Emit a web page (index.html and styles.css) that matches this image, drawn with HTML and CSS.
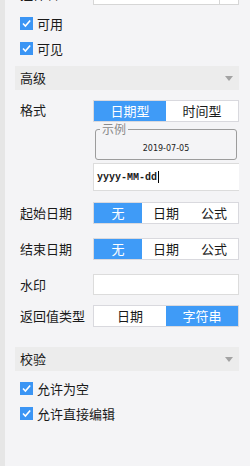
FILE: index.html
```html
<!DOCTYPE html>
<html lang="zh">
<head>
  <meta charset="UTF-8" />
  <title>控件属性</title>
  <link rel="stylesheet" href="styles.css">
</head>
<body>
  <div class="app">
    <div class="strip"></div>
    <div class="panel">
      <div class="row row-name">
        <span class="label">控件名</span>
        <div class="combo"><span class="combo-text"></span><span class="combo-btn"></span></div>
      </div>

      <label class="check check-first">
        <span class="box"><svg width="13" height="13" viewBox="0 0 13 13"><path d="M3 6.5 L5.4 9 L10.2 3.4" fill="none" stroke="#fff" stroke-width="1.6"/></svg></span>
        可用
      </label>
      <label class="check">
        <span class="box"><svg width="13" height="13" viewBox="0 0 13 13"><path d="M3 6.5 L5.4 9 L10.2 3.4" fill="none" stroke="#fff" stroke-width="1.6"/></svg></span>
        可见
      </label>

      <div class="group group-adv">高级<span class="caret"></span></div>

      <div class="row row-format">
        <span class="label label-top">格式</span>
        <div class="seg seg-2">
          <span class="on">日期型</span>
          <span>时间型</span>
        </div>
      </div>

      <div class="example">
        <span class="legend">示例</span>
        <div class="sample">2019-07-05</div>
      </div>

      <div class="pattern"><span>yyyy-MM-dd</span><i class="cursor"></i></div>

      <div class="row row-start">
        <span class="label">起始日期</span>
        <div class="seg seg-3">
          <span class="on">无</span>
          <span>日期</span>
          <span>公式</span>
        </div>
      </div>

      <div class="row row-end">
        <span class="label">结束日期</span>
        <div class="seg seg-3">
          <span class="on">无</span>
          <span>日期</span>
          <span>公式</span>
        </div>
      </div>

      <div class="row row-mark">
        <span class="label">水印</span>
        <div class="text-input"></div>
      </div>

      <div class="row row-return">
        <span class="label">返回值类型</span>
        <div class="seg seg-2">
          <span>日期</span>
          <span class="on">字符串</span>
        </div>
      </div>

      <div class="group group-check">校验<span class="caret"></span></div>

      <label class="check check-empty">
        <span class="box"><svg width="13" height="13" viewBox="0 0 13 13"><path d="M3 6.5 L5.4 9 L10.2 3.4" fill="none" stroke="#fff" stroke-width="1.6"/></svg></span>
        允许为空
      </label>
      <label class="check">
        <span class="box"><svg width="13" height="13" viewBox="0 0 13 13"><path d="M3 6.5 L5.4 9 L10.2 3.4" fill="none" stroke="#fff" stroke-width="1.6"/></svg></span>
        允许直接编辑
      </label>
    </div>
  </div>
</body>
</html>
```

FILE: styles.css
```css
body {
  margin: 0;
  background: #f4f4f6;
  font-family: "Noto Sans CJK SC", "Noto Sans", sans-serif;
  font-size: 13px;
  color: #1a1a1a;
  overflow: hidden;
}

.app {
  display: flex;
  height: 466px;
}

.strip {
  width: 5px;
  background: #e6e6e6;
  flex-shrink: 0;
}

.panel {
  width: 224px;
  margin-left: 10px;
  display: flex;
  flex-direction: column;
  overflow: hidden;
}

.row {
  display: flex;
  align-items: center;
  padding-left: 5px;
}

.label {
  width: 73px;
  flex-shrink: 0;
  line-height: 18px;
}

.label-top {
  align-self: flex-start;
  padding-top: 1px;
}

.row-name {
  margin-top: -18px;
  height: 23px;
}

.combo {
  width: 146px;
  height: 23px;
  box-sizing: border-box;
  border: 1px solid #d6d6d6;
  background: #fff;
  display: flex;
}

.combo-text {
  flex: 1;
}

.combo-btn {
  width: 18px;
  border-left: 1px solid #d6d6d6;
}

.check {
  display: flex;
  align-items: center;
  gap: 4px;
  padding-left: 5px;
  height: 13px;
  line-height: 13px;
  margin-top: 12px;
}

.check-first {
  margin-top: 12px;
}

.check-empty {
  margin-top: 11px;
}

.box {
  width: 13px;
  height: 13px;
  background: #3b95f4;
  display: block;
}

.box svg {
  display: block;
}

.group {
  height: 24px;
  line-height: 24px;
  background: #ececec;
  padding-left: 5px;
  position: relative;
}

.group-adv {
  margin-top: 11px;
}

.group-check {
  margin-top: 20px;
}

.caret {
  position: absolute;
  right: 6px;
  top: 10px;
  border-left: 4px solid transparent;
  border-right: 4px solid transparent;
  border-top: 5px solid #a3a3a3;
}

.seg {
  width: 147px;
  height: 22px;
  box-sizing: border-box;
  border: 1px solid #d9d9de;
  background: #fff;
  display: flex;
}

.seg span {
  flex: 1;
  text-align: center;
  line-height: 20px;
}

.seg .on {
  background: #3f9bf7;
  color: #fff;
}

.seg-3 span {
  flex: 0 0 48px;
}

.seg-3 span:last-child {
  flex: 1;
}

.row-format {
  margin-top: 10px;
}

.example {
  margin: 7px 0 0 80px;
  width: 142px;
  height: 31px;
  box-sizing: border-box;
  border: 1px solid #9c9c9c;
  border-radius: 3px;
  position: relative;
}

.legend {
  position: absolute;
  left: 4px;
  top: -8px;
  padding: 0 2px;
  background: #f4f4f6;
  color: #8a8a8a;
  font-size: 12px;
  line-height: 14px;
}

.sample {
  text-align: center;
  font-family: "DejaVu Sans", sans-serif;
  font-size: 8px;
  line-height: 10px;
  padding-top: 14px;
  color: #222;
}

.pattern {
  margin: 3px 0 0 78px;
  width: 147px;
  height: 28px;
  box-sizing: border-box;
  border: 1px solid #dcdcdc;
  background: #fff;
  display: flex;
  align-items: center;
  padding-left: 3px;
  font-family: "Liberation Mono", monospace;
  font-size: 10px;
  font-weight: bold;
  color: #202020;
}

.cursor {
  width: 1px;
  height: 12px;
  background: #000;
  margin-left: 1px;
}

.row-start {
  margin-top: 11px;
}

.row-end {
  margin-top: 14px;
}

.row-mark {
  margin-top: 14px;
}

.text-input {
  width: 146px;
  height: 21px;
  box-sizing: border-box;
  border: 1px solid #dcdcdc;
  background: #fff;
}

.row-return {
  margin-top: 10px;
}
```
